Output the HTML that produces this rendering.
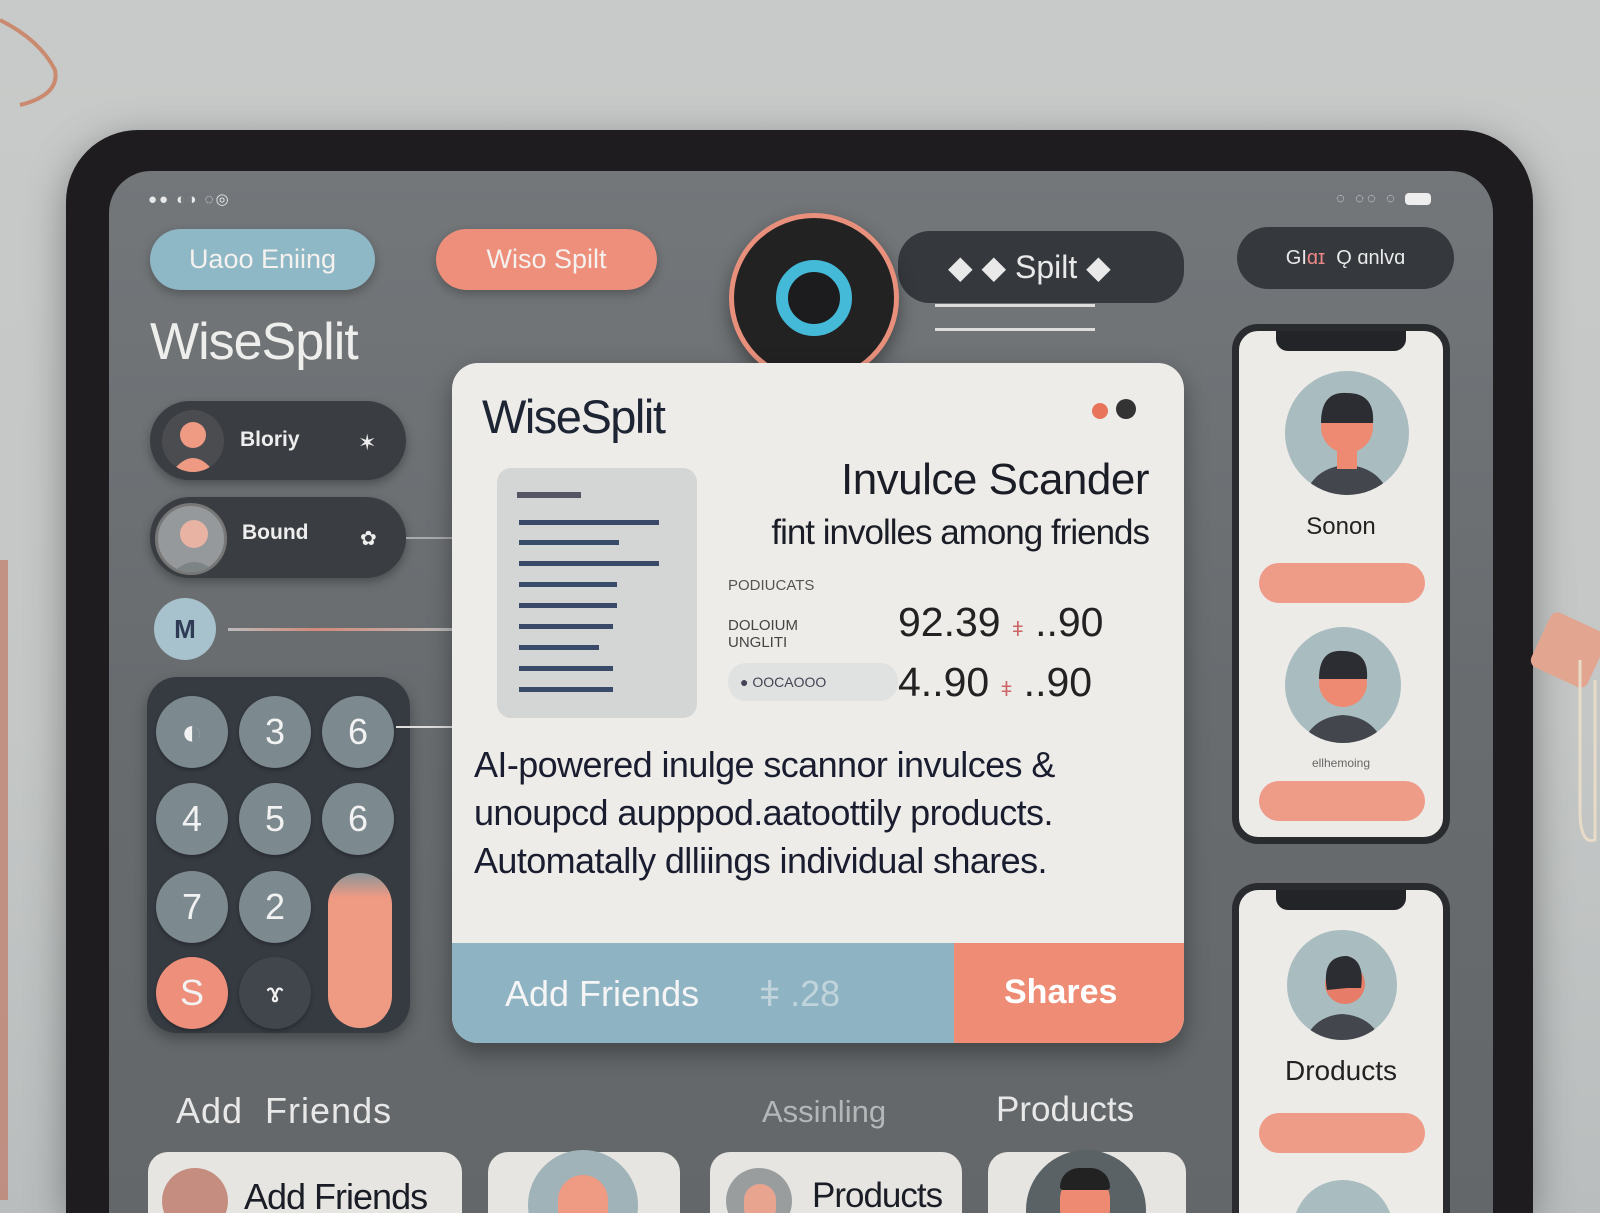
<!DOCTYPE html>
<html><head><meta charset="utf-8"><style>
*{margin:0;padding:0;box-sizing:border-box}
html,body{width:1600px;height:1213px;overflow:hidden}
body{position:relative;font-family:"Liberation Sans","DejaVu Sans",sans-serif}
#w{position:absolute;left:0;top:0;width:1600px;height:1213px;overflow:hidden;background:linear-gradient(180deg,#c8cac9 0%,#c4c7c6 60%,#b9bdbd 100%)}
.a{position:absolute}
.bezel{left:66px;top:130px;width:1467px;height:1083px;background:#1e1c1f;border-radius:72px 72px 0 0;box-shadow:0 10px 40px rgba(0,0,0,.35)}
.screen{left:109px;top:171px;width:1384px;height:1042px;background:linear-gradient(180deg,#73777a 0%,#686c6f 50%,#636769 100%);border-radius:42px 42px 0 0}
.pill{border-radius:32px;color:#f4f1ee;font-size:27px;display:flex;align-items:center;justify-content:center}
.dark{background:#35393d;color:#e9e9e9}
.btn{width:72px;height:72px;border-radius:50%;background:#7c898e;color:#f2f2f2;font-size:36px;display:flex;align-items:center;justify-content:center;box-shadow:0 2px 4px rgba(0,0,0,.3)}
.av{border-radius:50%;background:#a9bcc0;overflow:hidden}
.phone{background:#ecebe7;border:7px solid #2a2b2f;border-radius:26px;overflow:hidden}
.notch{left:50%;transform:translateX(-50%);top:-2px;width:130px;height:22px;background:#232428;border-radius:0 0 12px 12px}
</style></head><body><div id="w">
<svg class="a" style="left:0;top:0" width="70" height="120"><path d="M0 20 Q40 40 55 70 Q60 95 20 105" fill="none" stroke="#c98a70" stroke-width="4"/></svg>
<div class="a" style="left:0;top:560px;width:8px;height:640px;background:#c07a68;opacity:.7"></div>
<div class="a bezel"></div>
<div class="a" style="left:1538px;top:620px;width:62px;height:60px;background:#e2a590;border-radius:8px;transform:rotate(25deg)"></div>
<svg class="a" style="left:1560px;top:660px" width="40" height="220"><path d="M20 0 L20 150 Q20 185 35 180 L35 20" fill="none" stroke="#e8dcc8" stroke-width="3"/></svg>
<div class="a screen"></div>
<div class="a" style="left:148px;top:190px;color:#e8e8e8;font-size:15px;letter-spacing:2px">●● ◐◑ ◌◎</div>
<div class="a" style="left:1336px;top:190px;color:#e8e8e8;font-size:15px;letter-spacing:3px">◌ ◌◌ ◌ <span style="display:inline-block;width:26px;height:12px;background:#eee;border-radius:4px;vertical-align:middle"></span></div>
<div class="a pill" style="left:150px;top:229px;width:225px;height:61px;background:#8fb8c7;box-shadow:0 4px 10px rgba(0,0,0,.25)">Uaoo Eniing</div>
<div class="a pill" style="left:436px;top:229px;width:221px;height:61px;background:#ee8f7c;box-shadow:0 4px 10px rgba(0,0,0,.25)">Wiso Spilt</div>
<div class="a pill dark" style="left:898px;top:231px;width:286px;height:72px;justify-content:flex-start;padding-left:50px;font-size:32px">◆ ◆ Spilt ◆</div>
<div class="a" style="left:935px;top:304px;width:160px;height:3px;background:#ddd"></div>
<div class="a" style="left:935px;top:328px;width:160px;height:3px;background:#ddd"></div>
<div class="a pill dark" style="left:1237px;top:227px;width:217px;height:62px;font-size:20px">GΙ <span style="color:#e88">ɑɪ</span>&nbsp; Ǫ ɑnlvɑ</div>
<div class="a" style="left:729px;top:213px;width:170px;height:170px;border-radius:50%;background:#222;border:5px solid #e8907c;box-shadow:0 8px 18px rgba(0,0,0,.4)"></div>
<div class="a" style="left:776px;top:260px;width:76px;height:76px;border-radius:50%;background:#1c1c1e;border:12px solid #45b9d8"></div>
<div class="a" style="left:150px;top:312px;color:#eeeeec;font-size:52px;letter-spacing:-1px">WiseSplit</div>
<div class="a" style="left:150px;top:401px;width:256px;height:79px;border-radius:40px;background:#3a3d41;box-shadow:0 4px 10px rgba(0,0,0,.3)"></div>
<div class="a av" style="left:162px;top:410px;width:62px;height:62px;background:#4a4c50"><svg width="62" height="62"><circle cx="31" cy="25" r="13" fill="#ef9a83"/><path d="M10 62 Q31 34 52 62Z" fill="#ef9a83"/></svg></div>
<div class="a" style="left:240px;top:428px;color:#eee;font-size:21px;font-weight:bold">Bloriy</div>
<div class="a" style="left:358px;top:430px;color:#eee;font-size:22px">✶</div>
<div class="a" style="left:150px;top:497px;width:256px;height:81px;border-radius:40px;background:#3a3d41;box-shadow:0 4px 10px rgba(0,0,0,.3)"></div>
<div class="a av" style="left:155px;top:503px;width:72px;height:72px;background:#96999b;border:3px solid #777"><svg width="72" height="72"><circle cx="36" cy="28" r="14" fill="#e8b3a3"/><path d="M10 72 Q36 40 62 72Z" fill="#7d8485"/></svg></div>
<div class="a" style="left:242px;top:521px;color:#eee;font-size:21px;font-weight:bold">Bound</div>
<div class="a" style="left:360px;top:526px;color:#eee;font-size:20px">✿</div>
<div class="a" style="left:406px;top:537px;width:46px;height:2px;background:#aaa"></div>
<div class="a" style="left:154px;top:598px;width:62px;height:62px;border-radius:50%;background:#a7c2cc;color:#2f3b55;font-size:26px;font-weight:bold;display:flex;align-items:center;justify-content:center">M</div>
<div class="a" style="left:228px;top:628px;width:224px;height:3px;background:linear-gradient(90deg,#bbb,#d38a7a 40%,#bbb)"></div>
<div class="a" style="left:147px;top:677px;width:263px;height:356px;border-radius:30px;background:#363b42;box-shadow:0 6px 14px rgba(0,0,0,.3)"></div>
<div class="a btn" style="left:156px;top:696px">◐</div>
<div class="a btn" style="left:239px;top:696px">3</div>
<div class="a btn" style="left:322px;top:696px">6</div>
<div class="a" style="left:396px;top:726px;width:56px;height:2px;background:#ddd"></div>
<div class="a btn" style="left:156px;top:783px">4</div>
<div class="a btn" style="left:239px;top:783px">5</div>
<div class="a btn" style="left:322px;top:783px">6</div>
<div class="a btn" style="left:156px;top:871px">7</div>
<div class="a btn" style="left:239px;top:871px">2</div>
<div class="a btn" style="left:156px;top:957px;background:#ee8f7c">S</div>
<div class="a btn" style="left:239px;top:957px;background:#41464d;font-size:28px">ɤ</div>
<div class="a" style="left:328px;top:873px;width:64px;height:155px;border-radius:32px;background:linear-gradient(180deg,#8b9598 0%,#ef9a83 16%,#ef9a83 100%)"></div>
<div class="a" style="left:452px;top:363px;width:732px;height:680px;border-radius:26px;background:#eeece8;overflow:hidden;box-shadow:0 10px 24px rgba(0,0,0,.35)">
  <div class="a" style="left:30px;top:26px;color:#1d2433;font-size:47px;letter-spacing:-1.5px">WiseSplit</div>
  <div class="a" style="left:640px;top:40px;width:16px;height:16px;border-radius:50%;background:#e8745c"></div>
  <div class="a" style="left:664px;top:36px;width:20px;height:20px;border-radius:50%;background:#333"></div>
  <div class="a" style="left:45px;top:105px;width:200px;height:250px;border-radius:14px;background:#d4d6d6">
    <div class="a" style="left:20px;top:24px;width:64px;height:6px;background:#556"></div>
    <div class="a" style="left:22px;top:52px;width:140px;height:5px;background:#3a4b6a"></div>
    <div class="a" style="left:22px;top:72px;width:100px;height:5px;background:#3a4b6a"></div>
    <div class="a" style="left:22px;top:93px;width:140px;height:5px;background:#3a4b6a"></div>
    <div class="a" style="left:22px;top:114px;width:98px;height:5px;background:#3a4b6a"></div>
    <div class="a" style="left:22px;top:135px;width:98px;height:5px;background:#3a4b6a"></div>
    <div class="a" style="left:22px;top:156px;width:94px;height:5px;background:#3a4b6a"></div>
    <div class="a" style="left:22px;top:177px;width:80px;height:5px;background:#3a4b6a"></div>
    <div class="a" style="left:22px;top:198px;width:94px;height:5px;background:#3a4b6a"></div>
    <div class="a" style="left:22px;top:219px;width:94px;height:5px;background:#3a4b6a"></div>
  </div>
  <div class="a" style="right:35px;top:92px;color:#1a1d26;font-size:44px;letter-spacing:-.5px">Invulce Scander</div>
  <div class="a" style="right:35px;top:150px;color:#1a1d26;font-size:35px;letter-spacing:-1px">fint involles among friends</div>
  <div class="a" style="left:276px;top:214px;color:#555;font-size:15px">PODIUCATS</div>
  <div class="a" style="left:276px;top:254px;color:#444;font-size:15px">DOLOIUM<br>UNGLITI</div>
  <div class="a" style="left:276px;top:300px;width:170px;height:38px;border-radius:18px;background:#e0e1e1;color:#445;font-size:14px;padding:11px 12px">● OOCAOOO</div>
  <div class="a" style="left:446px;top:236px;color:#222;font-size:41px">92.39 <span style="color:#c66;font-size:20px">ǂ</span> ..90</div>
  <div class="a" style="left:446px;top:296px;color:#222;font-size:41px">4..90 <span style="color:#c66;font-size:20px">ǂ</span> ..90</div>
  <div class="a" style="left:22px;top:378px;color:#1a1d30;font-size:36px;line-height:48px;letter-spacing:-.6px;white-space:nowrap">AI-powered inulge scannor invulces &amp;<br>unoupcd aupppod.aatoottily products.<br>Automatally dlliings individual shares.</div>
  <div class="a" style="left:0;top:580px;width:502px;height:100px;background:#8eb3c3;color:#f5f5f5;font-size:36px;padding:30px 0 0 53px">Add Friends <span style="margin-left:50px;opacity:.5">ǂ .28</span></div>
  <div class="a" style="left:502px;top:580px;width:230px;height:100px;background:#ee8c76;color:#fff;font-size:34px;font-weight:bold;padding:30px 0 0 50px">Shares</div>
</div>
<div class="a phone" style="left:1232px;top:324px;width:218px;height:520px">
  <div class="a notch"></div>
  <div class="a av" style="left:46px;top:40px;width:124px;height:124px"><svg width="124" height="124"><circle cx="62" cy="56" r="26" fill="#ef8a72"/><path d="M36 52 Q36 20 62 22 Q90 22 88 52Z" fill="#2b2d33"/><path d="M20 124 Q30 96 62 94 Q94 96 104 124Z" fill="#43464d"/><rect x="52" y="78" width="20" height="20" fill="#ef8a72"/></svg></div>
  <div class="a" style="left:0;width:204px;top:182px;text-align:center;color:#222;font-size:24px">Sonon</div>
  <div class="a" style="left:20px;top:232px;width:166px;height:40px;border-radius:20px;background:#ee9b88"></div>
  <div class="a av" style="left:46px;top:296px;width:116px;height:116px"><svg width="116" height="116"><circle cx="58" cy="56" r="24" fill="#ef8a72"/><path d="M34 52 Q34 22 58 24 Q84 24 82 52Z" fill="#2b2d33"/><path d="M18 116 Q28 90 58 88 Q88 90 98 116Z" fill="#43464d"/></svg></div>
  <div class="a" style="left:0;width:204px;top:425px;text-align:center;color:#666;font-size:12px">ellhemoing</div>
  <div class="a" style="left:20px;top:450px;width:166px;height:40px;border-radius:20px;background:#ee9b88"></div>
</div>
<div class="a phone" style="left:1232px;top:883px;width:218px;height:330px;border-bottom:0;border-radius:26px 26px 0 0">
  <div class="a notch"></div>
  <div class="a av" style="left:48px;top:40px;width:110px;height:110px"><svg width="110" height="110"><circle cx="58" cy="54" r="20" fill="#e77d68"/><path d="M40 60 Q34 26 60 26 Q78 30 74 58 L60 58Z" fill="#2b2d33"/><path d="M18 110 Q28 86 55 84 Q84 86 94 110Z" fill="#43464d"/></svg></div>
  <div class="a" style="left:0;width:204px;top:165px;text-align:center;color:#222;font-size:28px">Droducts</div>
  <div class="a" style="left:20px;top:223px;width:166px;height:40px;border-radius:20px;background:#ee9b88"></div>
  <div class="a av" style="left:54px;top:290px;width:100px;height:100px"></div>
</div>
<div class="a" style="left:176px;top:1090px;color:#e8e8e8;font-size:36px;letter-spacing:1px">Add&nbsp; Friends</div>
<div class="a" style="left:762px;top:1094px;color:#c8cacb;font-size:31px;opacity:.8">Assinling</div>
<div class="a" style="left:996px;top:1090px;color:#e8e8e8;font-size:35px">Products</div>
<div class="a" style="left:140px;top:1146px;width:1060px;height:67px;overflow:hidden">
<div class="a" style="left:8px;top:6px;width:314px;height:100px;border-radius:20px;background:#e6e5e1"></div>
<div class="a av" style="left:22px;top:22px;width:66px;height:66px;background:#c58d80"></div>
<div class="a" style="left:104px;top:30px;color:#1a1d26;font-size:36px;letter-spacing:-1px;white-space:nowrap">Add Friends</div>
<div class="a" style="left:348px;top:6px;width:192px;height:100px;border-radius:20px;background:#e6e5e1"></div>
<div class="a av" style="left:388px;top:4px;width:110px;height:110px;background:#9fb3b8"><div class="a" style="left:30px;top:25px;width:50px;height:80px;border-radius:25px;background:#ef9a83"></div></div>
<div class="a" style="left:570px;top:6px;width:252px;height:100px;border-radius:20px;background:#e6e5e1"></div>
<div class="a av" style="left:586px;top:22px;width:66px;height:66px;background:#9a9d9e"><div class="a" style="left:18px;top:16px;width:32px;height:40px;border-radius:16px;background:#e8a48f"></div></div>
<div class="a" style="left:672px;top:30px;color:#1a1d26;font-size:35px;letter-spacing:-1px;white-space:nowrap">Products</div>
<div class="a" style="left:848px;top:6px;width:198px;height:100px;border-radius:20px;background:#e6e5e1"></div>
<div class="a av" style="left:886px;top:4px;width:120px;height:120px;background:#5a6266"><div class="a" style="left:34px;top:24px;width:50px;height:60px;border-radius:25px;background:#ef8a72"></div><div class="a" style="left:34px;top:18px;width:50px;height:22px;border-radius:25px 25px 4px 4px;background:#222"></div></div>
</div>
</div></body></html>
